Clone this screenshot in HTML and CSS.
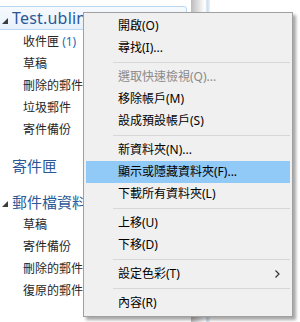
FILE: index.html
```html
<!doctype html>
<html lang="zh-Hant">
<head>
  <meta charset="utf-8">
  <title>郵件資料夾</title>
  <link rel="stylesheet" href="styles.css">
</head>
<body>
  <div id="screen">
    <div id="tree">
      <div class="head head-hover">
        <svg class="tri" width="6" height="6" viewBox="0 0 6 6"><polygon points="6,0 6,6 0,6"/></svg>
        <span class="head-text head-latin">Test.ublinkmail.com</span>
      </div>
      <div class="sub">收件匣 <span class="count">(1)</span></div>
      <div class="sub">草稿</div>
      <div class="sub">刪除的郵件</div>
      <div class="sub">垃圾郵件</div>
      <div class="sub">寄件備份</div>
      <div class="head head-plain">
        <span class="head-text">寄件匣</span>
      </div>
      <div class="head">
        <svg class="tri" width="6" height="6" viewBox="0 0 6 6"><polygon points="6,0 6,6 0,6"/></svg>
        <span class="head-text">郵件檔資料夾</span>
      </div>
      <div class="sub">草稿</div>
      <div class="sub">寄件備份</div>
      <div class="sub">刪除的郵件</div>
      <div class="sub">復原的郵件</div>
    </div>
    <div id="splitter"></div>
  </div>

  <div id="menu">
    <div class="item">開啟(O)</div>
    <div class="item">尋找(I)...</div>
    <div class="sep"></div>
    <div class="item disabled">選取快速檢視(Q)...</div>
    <div class="item">移除帳戶(M)</div>
    <div class="item">設成預設帳戶(S)</div>
    <div class="sep"></div>
    <div class="item">新資料夾(N)...</div>
    <div class="item selected">顯示或隱藏資料夾(F)...</div>
    <div class="item">下載所有資料夾(L)</div>
    <div class="sep"></div>
    <div class="item">上移(U)</div>
    <div class="item">下移(D)</div>
    <div class="sep"></div>
    <div class="item">設定色彩(T)
      <svg class="arrow" width="5" height="8" viewBox="0 0 5 8"><polyline points="0.5,0.5 4,4 0.5,7.5"/></svg>
    </div>
    <div class="sep"></div>
    <div class="item">內容(R)</div>
  </div>
</body>
</html>
```

FILE: styles.css
```css
html, body {
  margin: 0;
  padding: 0;
  background: #fff;
  width: 300px;
  height: 322px;
  overflow: hidden;
  font-family: "Noto Sans", "Noto Sans CJK TC", sans-serif;
}
#screen {
  display: flex;
  flex-flow: row nowrap;
  height: 322px;
}
#tree {
  width: 191px;
  flex: none;
  padding-top: 6px;
  overflow: hidden;
  white-space: nowrap;
}
#splitter {
  width: 19px;
  flex: none;
  background: linear-gradient(to right, #bcbcbc, #dcdcdc 35%, #f4f4f4 60%, #fff 75%, #c9dcef 85%, #eef2f6);
}
.head {
  display: flex;
  align-items: center;
  height: 24px;
  box-sizing: border-box;
  padding-left: 2px;
  gap: 4px;
  color: #2b5797;
  font-size: 15px;
}
.head + .sub {
  margin-top: 1px;
}
.sub + .head {
  margin-top: 12px;
}
.head + .head {
  margin-top: 12px;
}
.head-hover {
  margin-left: -2px;
  width: 189px;
  padding-left: 3px;
  border: 1px solid #b9d7f3;
  border-radius: 3px;
  background: linear-gradient(#f6fafe, #e8f1fb);
}
.head-plain {
  padding-left: 12px;
}
.tri {
  flex: none;
  margin-top: 5px;
  fill: #3c3c3c;
}
.head-latin {
  font-size: 16px;
  letter-spacing: 0.2px;
  width: 71px;
  overflow: hidden;
}
.sub {
  height: 22px;
  line-height: 22px;
  padding-left: 23px;
  font-size: 12px;
  color: #262626;
}
.count {
  color: #2a68b8;
}
#menu {
  position: absolute;
  left: 83px;
  top: 12px;
  width: 210px;
  box-sizing: border-box;
  padding: 2px;
  background: #f0f0f0;
  border: 1px solid #a0a0a0;
  box-shadow: 3px 3px 3px rgba(0, 0, 0, 0.35);
  font-size: 12px;
  color: #000;
}
.item {
  display: flex;
  align-items: center;
  height: 22px;
  line-height: 22px;
  padding-left: 32px;
  padding-right: 10px;
  white-space: nowrap;
}
.item.disabled {
  color: #8a8a8a;
}
.item.selected {
  background: #91c9f7;
}
.arrow {
  margin-left: auto;
  fill: none;
  stroke: #333;
  stroke-width: 1.2;
}
.sep {
  height: 1px;
  margin: 3px 0 3px 27px;
  background: #d7d7d7;
}
```
